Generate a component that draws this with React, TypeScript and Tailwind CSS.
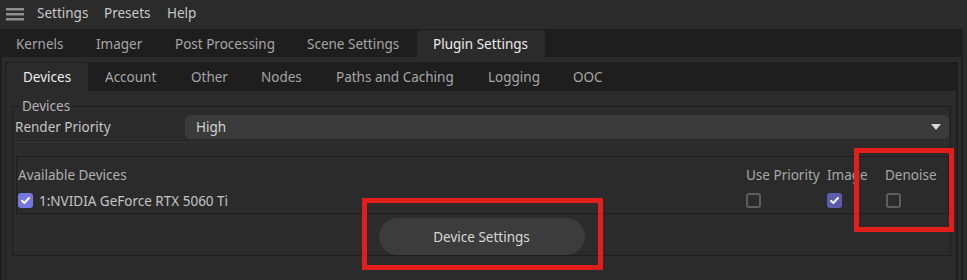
import React from "react";

const Check = ({ checked, bright }: { checked: boolean; bright?: boolean }) =>
  checked ? (
    <div
      className={
        "w-[15px] h-[15px] rounded-[3px] flex items-center justify-center " +
        (bright ? "bg-[#7777e2]" : "bg-[#5c5cad]")
      }
    >
      <svg width="11" height="11" viewBox="0 0 11 11">
        <path d="M2 5.8 L4.4 8 L9 3" stroke="#ffffff" strokeWidth="1.9" fill="none" strokeLinecap="round" strokeLinejoin="round" />
      </svg>
    </div>
  ) : (
    <div className="w-[15px] h-[15px] rounded-[3px] border-2 border-[#5e5e5e]" />
  );

export default function App() {
  const tabs1 = [
    { t: "Kernels", w: "w-[80px]" },
    { t: "Imager", w: "w-[79px]" },
    { t: "Post Processing", w: "w-[132px]" },
    { t: "Scene Settings", w: "w-[126px]" },
  ];
  const tabs2 = [
    { t: "Account", w: "w-[86px]" },
    { t: "Other", w: "w-[70px]" },
    { t: "Nodes", w: "w-[75px]" },
    { t: "Paths and Caching", w: "w-[152px]" },
    { t: "Logging", w: "w-[85px]" },
    { t: "OOC", w: "w-[60px]" },
  ];
  return (
    <div
      className="w-[967px] h-[280px] bg-[#2b2b2b] relative overflow-hidden text-[13.5px] leading-[18px]"
      style={{ fontFamily: '"Noto Sans", "Open Sans", sans-serif' }}
    >
      {/* Menu bar */}
      <div className="h-[29px] flex items-center pb-[3px] text-[#c8c8c8]">
        <svg className="ml-[6px] mt-[3px]" width="18" height="14" viewBox="0 0 18 14">
          <rect x="0" y="0" width="18" height="2.5" fill="#8e8e8e" />
          <rect x="0" y="5" width="18" height="2.5" fill="#8e8e8e" />
          <rect x="0" y="10" width="18" height="2.5" fill="#8e8e8e" />
        </svg>
        <span className="ml-[13px] w-[67px]">Settings</span>
        <span className="w-[63px]">Presets</span>
        <span>Help</span>
      </div>

      {/* Tab row 1 */}
      <div className="h-[28px] w-[963px] bg-[#1e1e1e] flex items-end">
        {tabs1.map((x) => (
          <div key={x.t} className={"h-[27px] flex items-center pl-[16px] text-[#a6a6a6] " + x.w}>
            {x.t}
          </div>
        ))}
        <div className="h-[27px] w-[128px] flex items-center pl-[16px] bg-[#2b2b2b] text-[#ececec] rounded-t-[3px]">
          Plugin Settings
        </div>
      </div>

      {/* Outer panel */}
      <div className="w-[963px] h-[223px] border-l-2 border-r-2 border-[#1e1e1e] pt-[5px] pl-[3px]">
        {/* Tab row 2 */}
        <div className="w-[953px] h-[29px] bg-[#1e1e1e] flex items-end pl-[1px]">
          <div className="h-[28px] w-[82px] flex items-center pl-[17px] bg-[#2b2b2b] text-[#ececec] rounded-t-[3px]">
            Devices
          </div>
          {tabs2.map((x) => (
            <div key={x.t} className={"h-[28px] flex items-center pl-[17px] text-[#a6a6a6] " + x.w}>
              {x.t}
            </div>
          ))}
        </div>

        {/* Inner panel */}
        <div className="w-[953px] h-[200px] border-l border-r-2 border-[#1e1e1e] pl-[6px] pt-[6px]">
          <fieldset className="w-[939px] border border-[#1e1e1e] px-[1px]">
            <legend className="ml-[6px] px-[2px] text-[#b4b4b4]">Devices</legend>

            {/* Render priority */}
            <div className="h-[24px] flex items-center">
              <div className="w-[171px] pl-[1px] text-[#c4c4c4]">Render Priority</div>
              <div className="w-[764px] h-[24px] rounded-[5px] bg-[#3b3b3b] flex items-center justify-between pl-[11px] pr-[8px] text-[#d2d2d2]">
                <span>High</span>
                <svg width="10" height="6" viewBox="0 0 10 6">
                  <path d="M0 0 L10 0 L5 6 Z" fill="#d6d6d6" />
                </svg>
              </div>
            </div>

            <div className="mt-[3px] h-px w-[935px] bg-[#353535]" />

            {/* Available devices box */}
            <div className="mt-[13px] ml-[2px] w-[933px] h-[58px] border border-[#1e1e1e] pl-[1px] pt-[9px]">
              <div className="flex h-[18px] items-center text-[#a8a8a8]">
                <div className="flex-1 text-[#b0b0b0]">Available Devices</div>
                <div className="w-[81px]">Use Priority</div>
                <div className="w-[58px]">Image</div>
                <div className="w-[63px]">Denoise</div>
              </div>
              <div className="flex h-[15px] mt-[9px] items-center">
                <div className="flex-1 flex items-center gap-[6px] text-[#c4c4c4]">
                  <Check checked bright />
                  <span>1:NVIDIA GeForce RTX 5060 Ti</span>
                </div>
                <div className="w-[81px]">
                  <Check checked={false} />
                </div>
                <div className="w-[58px]">
                  <Check checked />
                </div>
                <div className="w-[63px] pl-[1px]">
                  <Check checked={false} />
                </div>
              </div>
            </div>

            <div className="flex justify-center mt-[4px]">
              <button className="w-[206px] h-[37px] rounded-full bg-[#3c3c3c] text-[#d8d8d8]">
                Device Settings
              </button>
            </div>
          </fieldset>
        </div>
      </div>

      {/* Red annotation boxes */}
      <div className="absolute left-[362px] top-[198px] w-[241px] h-[72px] border-[5px] border-[#e31c1c]" />
      <div className="absolute left-[854px] top-[148px] w-[100px] h-[84px] border-[5px] border-[#e31c1c]" />
    </div>
  );
}
